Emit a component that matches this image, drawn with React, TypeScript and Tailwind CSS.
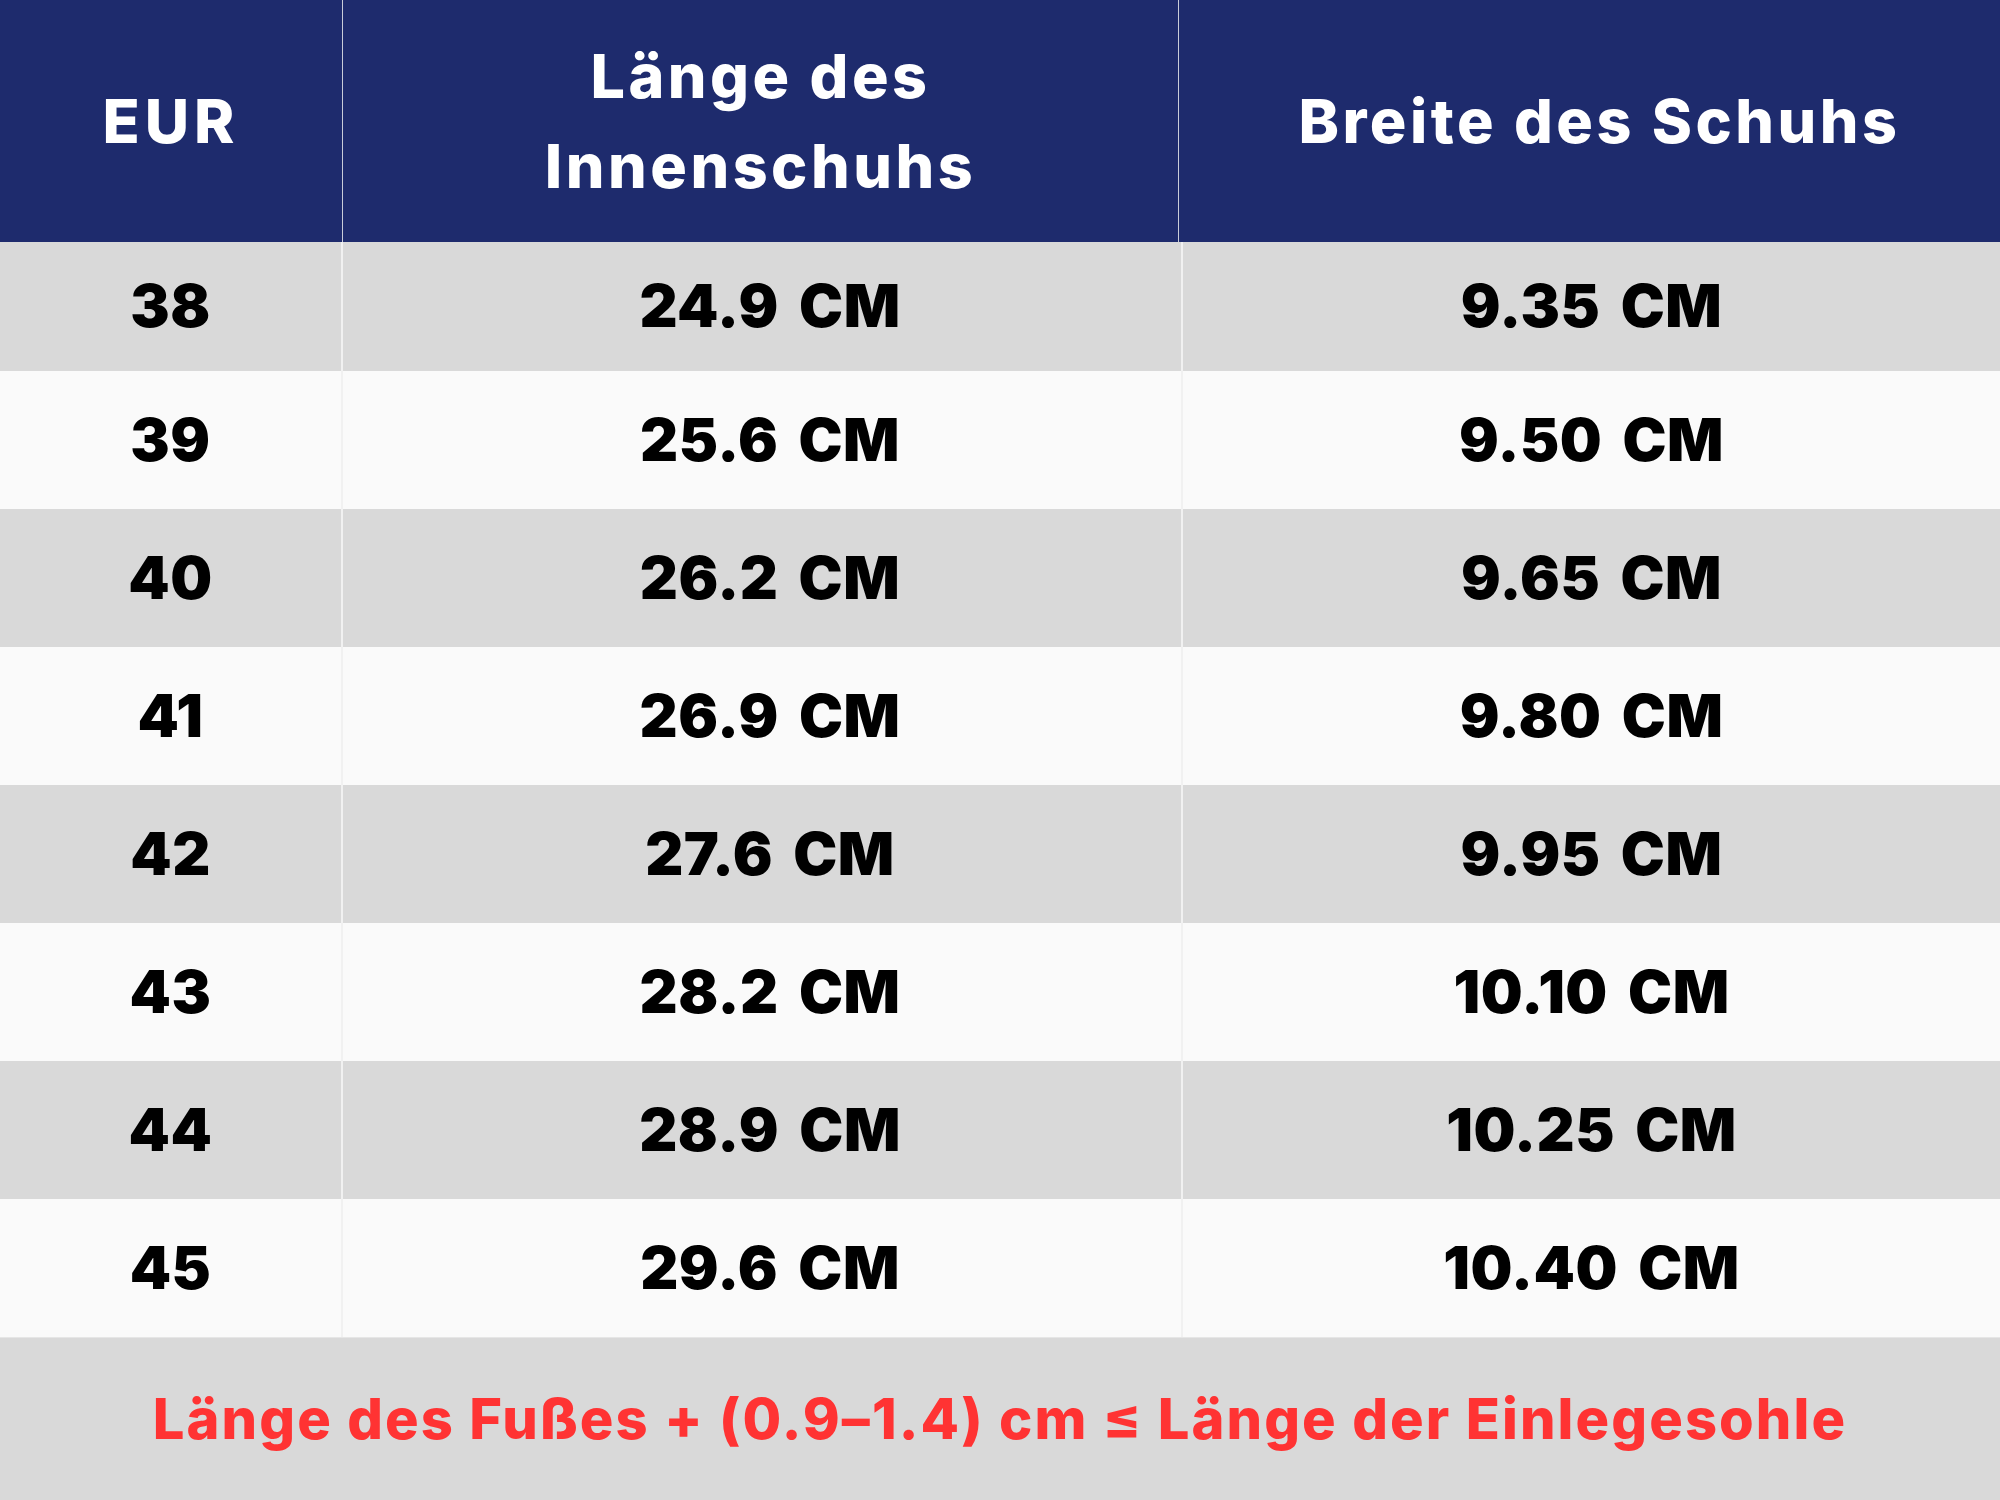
import React from 'react';

const rows = [
  { eur: '38', length: '24.9 CM', width: '9.35 CM' },
  { eur: '39', length: '25.6 CM', width: '9.50 CM' },
  { eur: '40', length: '26.2 CM', width: '9.65 CM' },
  { eur: '41', length: '26.9 CM', width: '9.80 CM' },
  { eur: '42', length: '27.6 CM', width: '9.95 CM' },
  { eur: '43', length: '28.2 CM', width: '10.10 CM' },
  { eur: '44', length: '28.9 CM', width: '10.25 CM' },
  { eur: '45', length: '29.6 CM', width: '10.40 CM' },
];

export default function App() {
  return (
    <div className="flex h-[1500px] w-[2000px] flex-col bg-[#fafafa] font-['Inter',sans-serif]">
      {/* Header */}
      <div className="grid h-[242px] grid-cols-[342px_836px_1fr] bg-[#1e2b6d] text-[61px] font-extrabold leading-[90px] tracking-[3.5px] text-white">
        <div className="flex items-center justify-center tracking-[5px]">EUR</div>
        <div className="flex items-center justify-center border-l border-[#c9ccd9] text-center">
          Länge des
          <br />
          Innenschuhs
        </div>
        <div className="flex items-center justify-center border-l border-[#c9ccd9] pl-[20px]">
          Breite des Schuhs
        </div>
      </div>

      {/* Size rows */}
      {rows.map((row, i) => (
        <div
          key={row.eur}
          className={
            'grid grid-cols-[341px_840px_1fr] text-[59px] font-black tracking-[0.5px] text-black [word-spacing:8px] ' +
            (i === 0 ? 'h-[129px] ' : 'h-[138px] ') +
            (i % 2 === 0 ? 'bg-[#d9d9d9]' : 'bg-[#fafafa]')
          }
        >
          <div className="flex items-center justify-center">{row.eur}</div>
          <div className="flex items-center justify-center border-l-2 border-[#f1f1f1] pl-[16px]">{row.length}</div>
          <div className="flex items-center justify-center border-l-2 border-[#f1f1f1]">{row.width}</div>
        </div>
      ))}

      {/* Footer note */}
      <div className="flex flex-1 items-center justify-center border-t border-[#e6e6e6] bg-[#d9d9d9] text-[56px] font-extrabold tracking-[2.1px] text-[#ff3333]">
        Länge des Fußes + (0.9–1.4) cm ≤ Länge der Einlegesohle
      </div>
    </div>
  );
}
